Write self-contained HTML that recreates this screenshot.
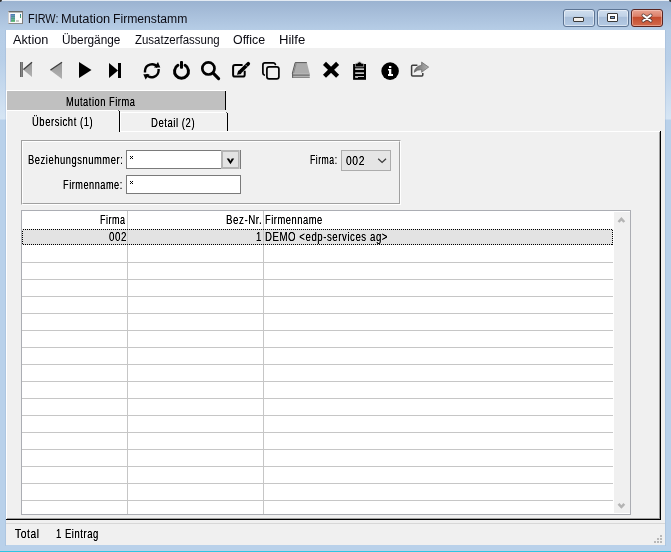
<!DOCTYPE html>
<html><head><meta charset="utf-8">
<style>
*{margin:0;padding:0;box-sizing:border-box}
html,body{width:671px;height:552px;overflow:hidden;background:#b9d1ea;font-family:"Liberation Sans",sans-serif;color:#000}
.a{position:absolute}
.t{position:absolute;white-space:nowrap;line-height:1;transform-origin:0 0;font-size:12px}
.c{filter:url(#thk)}
.cbtn{top:9px;width:32px;height:18px;border:1px solid #5d7493;border-radius:3px;background:linear-gradient(to bottom,#d0deee 0,#c0d2e7 40%,#a8bed9 44%,#b4cae4 100%);box-shadow:inset 0 0 0 1px rgba(255,255,255,.5)}
#closeb{background:linear-gradient(to bottom,#e8a492 0,#dc8069 40%,#c44b2c 44%,#d26a4c 100%);border-color:#5a2420;box-shadow:inset 0 0 0 1px rgba(255,220,210,.45)}
</style></head><body>
<svg width="0" height="0" style="position:absolute"><filter id="thk" x="-5%" y="-20%" width="110%" height="140%"><feComponentTransfer><feFuncA type="linear" slope="1.3" intercept="0"/></feComponentTransfer></filter></svg>
<div class="a" style="left:0;top:0;width:671px;height:552px;background:linear-gradient(to bottom,#9ab2d0 0px,#a6bdd9 12px,#b6cde6 30px,#b8cfe8 60px,#d6e5f4 119px,#b9d1ea 120px,#b9d1ea 552px)"></div>
<div class="a" style="left:0;top:0;width:671px;height:1px;background:#e4ebf3"></div>
<div class="a" style="left:0;top:0;width:2px;height:2px;background:#303030;border-bottom-right-radius:2px"></div>
<div class="a" style="left:669px;top:0;width:2px;height:2px;background:#303030;border-bottom-left-radius:2px"></div>
<div class="a" style="left:0;top:551px;width:671px;height:1px;background:#2ec5e2"></div>
<div class="a" style="left:5px;top:30px;width:1px;height:516px;background:rgba(120,150,190,.18)"></div>
<div class="a" style="left:665px;top:30px;width:1px;height:516px;background:rgba(120,150,190,.18)"></div>

<div class="a" style="left:8px;top:11px;width:15px;height:13px;background:#fbfbfb;border-top:1px solid #686868;border-right:1px solid #7c7c7c;border-bottom:1px solid #8c8c8c;border-left:1px solid #d0d0d0;box-shadow:inset 0 1px 0 #b8b8b8"></div>
<div class="a" style="left:10px;top:14px;width:5px;height:8px;background:repeating-linear-gradient(to bottom,rgba(255,255,255,0) 0,rgba(255,255,255,0) 1px,rgba(255,255,255,.15) 1px,rgba(255,255,255,.15) 2px),linear-gradient(to bottom,#4a78b8,#52b466);border-left:1px solid #b0a8dc"></div>
<div class="a" style="left:20px;top:14px;width:1px;height:4px;background:linear-gradient(to bottom,#2f6db0,#4caf50)"></div>
<div class="a" style="left:16px;top:20px;width:3px;height:2px;background:#c8c8c8"></div>

<div class="t " style="left:28.09px;top:13px;transform:scaleX(0.9062);color:#0c0c14;">FIRW:</div>
<div class="t " style="left:60.93px;top:13px;transform:scaleX(1.0682);color:#0c0c14;">Mutation</div>
<div class="t " style="left:112.99px;top:13px;transform:scaleX(1.0139);color:#0c0c14;">Firmenstamm</div>
<div class="a cbtn" style="left:563px"></div>
<div class="a" style="left:573px;top:17px;width:11px;height:5px;background:#f4f0ec;border:1px solid #3a3a3a;border-radius:1px"></div>
<div class="a cbtn" style="left:597px"></div>
<div class="a" style="left:607px;top:13px;width:11px;height:9px;background:#fff;border:1px solid #3a3a3a;border-radius:1px"></div>
<div class="a" style="left:610px;top:16px;width:5px;height:3px;background:#7ea4d4;border:1px solid #3a3a3a"></div>
<div class="a cbtn" id="closeb" style="left:631px"></div>
<svg class="a" style="left:639px;top:12px" width="16" height="12" viewBox="0 0 16 12">
<path d="M4.3 3.4 L11.7 8.8 M11.7 3.4 L4.3 8.8" stroke="#5a3a34" stroke-width="3.6" stroke-linecap="round"/>
<path d="M4.3 3.4 L11.7 8.8 M11.7 3.4 L4.3 8.8" stroke="#fff" stroke-width="2.0" stroke-linecap="round"/>
</svg>

<div class="a" style="left:6px;top:30px;width:659px;height:515px;background:#f0f0f0"></div>
<div class="a" style="left:6px;top:30px;width:659px;height:18px;background:#fff"></div>

<div class="t " style="left:13.00px;top:34px;transform:scaleX(1.0606);color:#0a0a12;">Aktion</div>
<div class="t " style="left:62.02px;top:34px;transform:scaleX(0.9828);color:#0a0a12;">Übergänge</div>
<div class="t " style="left:135.00px;top:34px;transform:scaleX(0.9545);color:#0a0a12;">Zusatzerfassung</div>
<div class="t " style="left:232.97px;top:34px;transform:scaleX(1.0333);color:#0a0a12;">Office</div>
<div class="t " style="left:278.91px;top:34px;transform:scaleX(1.0909);color:#0a0a12;">Hilfe</div>
<svg class="a" style="left:0;top:48px" width="440" height="40" viewBox="0 48 440 40">
<defs>
<linearGradient id="gbar" x1="0" x2="1" y1="0" y2="0"><stop offset="0" stop-color="#4e4e4e"/><stop offset="0.45" stop-color="#8a8a8a"/><stop offset="1" stop-color="#6a6a6a"/></linearGradient>
<linearGradient id="gtri" x1="0" x2="0" y1="0" y2="1"><stop offset="0" stop-color="#9a9a9a"/><stop offset="1" stop-color="#b0b0b0"/></linearGradient>
<linearGradient id="gsh" x1="0" x2="1" y1="0" y2="0"><stop offset="0" stop-color="#6a6a6a"/><stop offset="1" stop-color="#b4b4b4"/></linearGradient>
</defs>
<!-- first (disabled) -->
<rect x="20" y="62" width="3" height="15" fill="url(#gbar)"/>
<path d="M32 62 L23 69.5 L32 77 Z" fill="url(#gtri)"/>
<path d="M32 62.3 L23.5 69.5" stroke="#3e3e3e" stroke-width="1.3"/>
<!-- prev (disabled) -->
<path d="M62 62 L50 70 L62 79 Z" fill="url(#gtri)"/>
<path d="M62 62.3 L50.5 70" stroke="#3e3e3e" stroke-width="1.3"/>
<!-- play -->
<path d="M79 62 L91.5 70 L79 78 Z" fill="#000"/>
<!-- last -->
<path d="M109 63 L118 70.5 L109 78 Z" fill="#000"/>
<rect x="118" y="63" width="3" height="15" fill="#000"/>
<!-- refresh -->
<path d="M145 72.6 V70.8 A6.85 6.85 0 0 1 157.4 67.2" fill="none" stroke="#000" stroke-width="2.4"/>
<path d="M154 67.4 L160.3 67.4 L158 62 Z" fill="#000"/>
<path d="M158.6 69 V70.8 A6.85 6.85 0 0 1 146.2 74.4" fill="none" stroke="#000" stroke-width="2.4"/>
<path d="M143.3 74.2 L149.6 74.2 L145.6 79.6 Z" fill="#000"/>
<!-- power -->
<path d="M177.9 65.3 A7 7 0 1 0 185.1 65.3" fill="none" stroke="#000" stroke-width="3" stroke-linecap="round"/>
<rect x="180" y="61" width="3" height="7.8" rx="1" fill="#000"/>
<!-- search -->
<circle cx="208.4" cy="68.4" r="6.1" fill="none" stroke="#000" stroke-width="2.7"/>
<path d="M213.2 73.2 L218.6 78.6" stroke="#000" stroke-width="3.1" stroke-linecap="round"/>
<!-- edit -->
<path d="M242.6 65 H235 Q233.1 65 233.1 66.9 V74.7 Q233.1 76.6 235 76.6 H242.8 Q244.7 76.6 244.7 74.7 V70.8" fill="none" stroke="#000" stroke-width="2"/>
<path d="M236.9 74.8 L238.3 70.6 L241.6 73.9 Z" fill="#000"/>
<path d="M239.9 72.1 L248.3 63.7" stroke="#000" stroke-width="3.6" stroke-linecap="round"/>
<path d="M245.6 64.9 L247.3 66.6" stroke="#f0f0f0" stroke-width="0.7"/>
<!-- copy -->
<path d="M264.3 75 Q262.9 74.5 262.9 73 V64.9 Q262.9 62.9 264.9 62.9 H273.3 Q274.8 62.9 275.4 64.4" fill="none" stroke="#000" stroke-width="1.7" stroke-linecap="round"/>
<rect x="266.9" y="66.9" width="12" height="12" rx="2.2" fill="none" stroke="#000" stroke-width="1.7"/>
<!-- drive (disabled) -->
<path d="M295.2 62.2 H306.8 L309.6 73.5 H292.3 Z" fill="#acacac"/>
<path d="M292.3 73.5 L295.2 62.6 H306.8" fill="none" stroke="#5a5a5a" stroke-width="1"/>
<path d="M296.2 63.5 L293.6 73" stroke="#888" stroke-width="1"/>
<rect x="292.1" y="73" width="17.6" height="4.7" fill="#b4b4b4"/>
<rect x="292.1" y="74.6" width="17.6" height="1" fill="#5e5e5e"/>
<rect x="292.1" y="77" width="17.6" height="0.8" fill="#7a7a7a"/>
<rect x="292.1" y="73" width="1" height="4.7" fill="#5e5e5e"/>
<!-- X -->
<path d="M324.5 63.4 L337.6 76.3 M337.6 63.4 L324.5 76.3" stroke="#000" stroke-width="4.3"/>
<!-- clipboard -->
<rect x="353.1" y="64" width="12.9" height="15.8" fill="#000"/>
<path d="M355.4 66.8 V64.2 Q355.4 63.4 356.6 63.4 H357.4 Q357.8 61.9 359.5 61.9 Q361.2 61.9 361.6 63.4 H362.4 Q363.6 63.4 363.6 64.2 V66.8 Z" fill="#000" stroke="#a8a8a8" stroke-width="0.8"/>
<rect x="355.2" y="68.3" width="8.8" height="1.7" fill="#c4c4c4"/>
<rect x="355.2" y="72.3" width="8.8" height="1.7" fill="#c4c4c4"/>
<rect x="355.2" y="76" width="8.8" height="1" fill="#c4c4c4"/>
<rect x="355.2" y="76" width="2.8" height="2" fill="#b0b0b0"/>
<!-- info -->
<circle cx="390.1" cy="71.1" r="8.8" fill="#000"/>
<rect x="389" y="66" width="2.3" height="2" fill="#fff"/>
<path d="M388 69 H391.3 V74 H393 V76 H388 V74 H389 V70.6 H388 Z" fill="#fff"/>
<!-- share -->
<path d="M417.4 65.2 H412.6 Q411.6 65.2 411.6 66.2 V75.1 Q411.6 76 412.6 76 H421.9 Q422.8 76 422.8 75.1 V73" fill="none" stroke="#3c3c3c" stroke-width="1.5"/>
<path d="M414.2 72.3 Q415 66.3 421.6 65.3 V62.1 L428.7 67.1 L421.6 72.3 V69.6 Q417 69.6 414.2 72.3 Z" fill="url(#gsh)" stroke="#555" stroke-width="0.6"/>
</svg>

<div class="a" style="left:6px;top:90px;width:220px;height:20px;background:#fff"></div>
<div class="a" style="left:7px;top:91px;width:218px;height:19px;background:#c0c0c0"></div>
<div class="a" style="left:225px;top:91px;width:1px;height:19px;background:#000"></div>
<div class="a" style="left:6px;top:110px;width:113px;height:1px;background:#fff"></div>
<div class="a" style="left:119px;top:111px;width:1px;height:21px;background:#000"></div>
<div class="a" style="left:118px;top:110px;width:1px;height:1px;background:#666"></div>
<div class="a" style="left:120px;top:112px;width:106px;height:1px;background:#fff"></div>
<div class="a" style="left:120px;top:112px;width:1px;height:19px;background:#fff"></div>
<div class="a" style="left:227px;top:113px;width:1px;height:18px;background:#000"></div>
<div class="a" style="left:226px;top:112px;width:1px;height:1px;background:#666"></div>
<div class="a" style="left:120px;top:131px;width:541px;height:1px;background:#fff"></div>
<div class="a" style="left:6px;top:110px;width:1px;height:410px;background:#fff"></div>
<div class="a" style="left:660px;top:131px;width:1px;height:389px;background:#000"></div>
<div class="a" style="left:659px;top:132px;width:1px;height:387px;background:#a0a0a0"></div>
<div class="a" style="left:7px;top:518px;width:653px;height:1px;background:#a0a0a0"></div>
<div class="a" style="left:6px;top:519px;width:655px;height:1px;background:#000"></div>

<div class="t c" style="left:66.23px;top:96px;transform:scaleX(0.7727);color:#000;letter-spacing:0.7px;">Mutation Firma</div>
<div class="t c" style="left:32.21px;top:116px;transform:scaleX(0.7867);color:#000;letter-spacing:0.7px;">Übersicht (1)</div>
<div class="t c" style="left:151.21px;top:117px;transform:scaleX(0.7925);color:#000;letter-spacing:0.7px;">Detail (2)</div>
<div class="a" style="left:21px;top:140px;width:380px;height:65px;border:1px solid #fff;border-left-color:#a0a0a0;border-top-color:#a0a0a0"></div>
<div class="a" style="left:22px;top:141px;width:378px;height:63px;border:1px solid #a0a0a0;border-left-color:#fff;border-top-color:#fff"></div>
<div class="a" style="left:126px;top:150px;width:96px;height:19px;background:#fff;border:1px solid #7a7a7a;border-right:none"></div>
<div class="a" style="left:221px;top:150px;width:18px;height:19px;background:#e3e3e3;border:2px solid #b4b4b4;border-right-width:1px"></div>
<div class="a" style="left:239px;top:150px;width:1px;height:19px;background:#cdcdcd"></div>
<div class="a" style="left:240px;top:150px;width:1px;height:19px;background:#7a7a7a"></div>
<svg class="a" style="left:0;top:0" width="250" height="170" viewBox="0 0 250 170"><path d="M226.7 158.5 H229.1 L230.45 161.0 L231.8 158.5 H234.2 L230.45 164.3 Z" fill="#000"/></svg>
<div class="a" style="left:126px;top:175px;width:115px;height:19px;background:#fff;border:1px solid #7a7a7a"></div>
<svg class="a" style="left:129px;top:155px" width="6" height="30" viewBox="0 0 6 30" shape-rendering="crispEdges">
<rect x="1" y="1" width="1" height="1"/><rect x="3" y="1" width="1" height="1"/><rect x="2" y="2" width="1" height="1"/><rect x="1" y="3" width="1" height="1"/><rect x="3" y="3" width="1" height="1"/>
<rect x="1" y="26" width="1" height="1"/><rect x="3" y="26" width="1" height="1"/><rect x="2" y="27" width="1" height="1"/><rect x="1" y="28" width="1" height="1"/><rect x="3" y="28" width="1" height="1"/>
</svg>
<div class="a" style="left:341px;top:150px;width:50px;height:21px;background:#e5e5e5;border:1px solid #acacac"></div>
<svg class="a" style="left:376px;top:156px" width="12" height="8" viewBox="0 0 12 8"><path d="M2.2 2.8 L6.1 6.4 L10 2.8" fill="none" stroke="#3a3a3a" stroke-width="1.25"/></svg>

<div class="t c" style="left:28.22px;top:154px;transform:scaleX(0.7815);color:#000;letter-spacing:0.7px;">Beziehungsnummer:</div>
<div class="t c" style="left:63.24px;top:179px;transform:scaleX(0.7632);color:#000;letter-spacing:0.7px;">Firmenname:</div>
<div class="t c" style="left:310.28px;top:154px;transform:scaleX(0.7222);color:#000;letter-spacing:0.7px;">Firma:</div>
<div class="t c" style="left:346.00px;top:155px;transform:scaleX(0.8571);color:#000;letter-spacing:0.7px;">002</div>
<div class="a" style="left:21px;top:210px;width:610px;height:305px;background:#fff;border:1px solid #abadb3"></div>
<div class="a" style="left:614px;top:212px;width:16px;height:301px;background:#f0f0f0"></div>
<svg class="a" style="left:0;top:0" width="671" height="552" viewBox="0 0 671 552">
<path d="M618.5 222 L621.4 218.8 L624.3 222" fill="none" stroke="#b4b4b4" stroke-width="2.5"/>
<path d="M618.5 503.8 L621.4 507 L624.3 503.8" fill="none" stroke="#b4b4b4" stroke-width="2.5"/>
</svg>

<svg class="a" style="left:0;top:0" width="671" height="552" viewBox="0 0 671 552" shape-rendering="crispEdges">
<rect x="22" y="229" width="591" height="16" fill="#e3e3e3"/>
<rect x="22" y="262" width="591" height="1" fill="#c6c6c6"/>
<rect x="22" y="279" width="591" height="1" fill="#c6c6c6"/>
<rect x="22" y="296" width="591" height="1" fill="#c6c6c6"/>
<rect x="22" y="313" width="591" height="1" fill="#c6c6c6"/>
<rect x="22" y="330" width="591" height="1" fill="#c6c6c6"/>
<rect x="22" y="347" width="591" height="1" fill="#c6c6c6"/>
<rect x="22" y="364" width="591" height="1" fill="#c6c6c6"/>
<rect x="22" y="381" width="591" height="1" fill="#c6c6c6"/>
<rect x="22" y="398" width="591" height="1" fill="#c6c6c6"/>
<rect x="22" y="415" width="591" height="1" fill="#c6c6c6"/>
<rect x="22" y="432" width="591" height="1" fill="#c6c6c6"/>
<rect x="22" y="449" width="591" height="1" fill="#c6c6c6"/>
<rect x="22" y="466" width="591" height="1" fill="#c6c6c6"/>
<rect x="22" y="483" width="591" height="1" fill="#c6c6c6"/>
<rect x="22" y="500" width="591" height="1" fill="#c6c6c6"/>
<rect x="127" y="211" width="1" height="303" fill="#c6c6c6"/>
<rect x="263" y="211" width="1" height="303" fill="#c6c6c6"/>
<rect x="22.5" y="229.5" width="590" height="15" fill="none" stroke="#000" stroke-width="1" stroke-dasharray="1 1"/>
</svg>
<div class="t c" style="left:100.25px;top:214px;transform:scaleX(0.7500);color:#000;letter-spacing:0.7px;">Firma</div>
<div class="t c" style="left:226.19px;top:214px;transform:scaleX(0.8095);color:#000;letter-spacing:0.7px;">Bez-Nr.</div>
<div class="t c" style="left:265.22px;top:214px;transform:scaleX(0.7778);color:#000;letter-spacing:0.7px;">Firmenname</div>
<div class="t c" style="left:109.00px;top:231px;transform:scaleX(0.8095);color:#000;letter-spacing:0.7px;">002</div>
<div class="t c" style="left:256.20px;top:231px;transform:scaleX(0.8000);color:#000;letter-spacing:0.7px;">1</div>
<div class="t c" style="left:265.20px;top:231px;transform:scaleX(0.8013);color:#000;letter-spacing:0.7px;">DEMO &lt;edp-services ag&gt;</div>
<div class="a" style="left:6px;top:523px;width:659px;height:1px;background:#d7d7d7"></div>
<div class="t c" style="left:15.00px;top:528px;transform:scaleX(0.8519);color:#000;letter-spacing:0.7px;">Total</div>
<div class="t c" style="left:56.21px;top:528px;transform:scaleX(0.7885);color:#000;letter-spacing:0.7px;">1 Eintrag</div>
<div class="a" style="left:660px;top:535px;width:2px;height:2px;background:#b8b8b8"></div>
<div class="a" style="left:657px;top:538px;width:2px;height:2px;background:#b8b8b8"></div>
<div class="a" style="left:660px;top:538px;width:2px;height:2px;background:#b8b8b8"></div>
<div class="a" style="left:654px;top:541px;width:2px;height:2px;background:#b8b8b8"></div>
<div class="a" style="left:657px;top:541px;width:2px;height:2px;background:#b8b8b8"></div>
<div class="a" style="left:660px;top:541px;width:2px;height:2px;background:#b8b8b8"></div>
</body></html>
